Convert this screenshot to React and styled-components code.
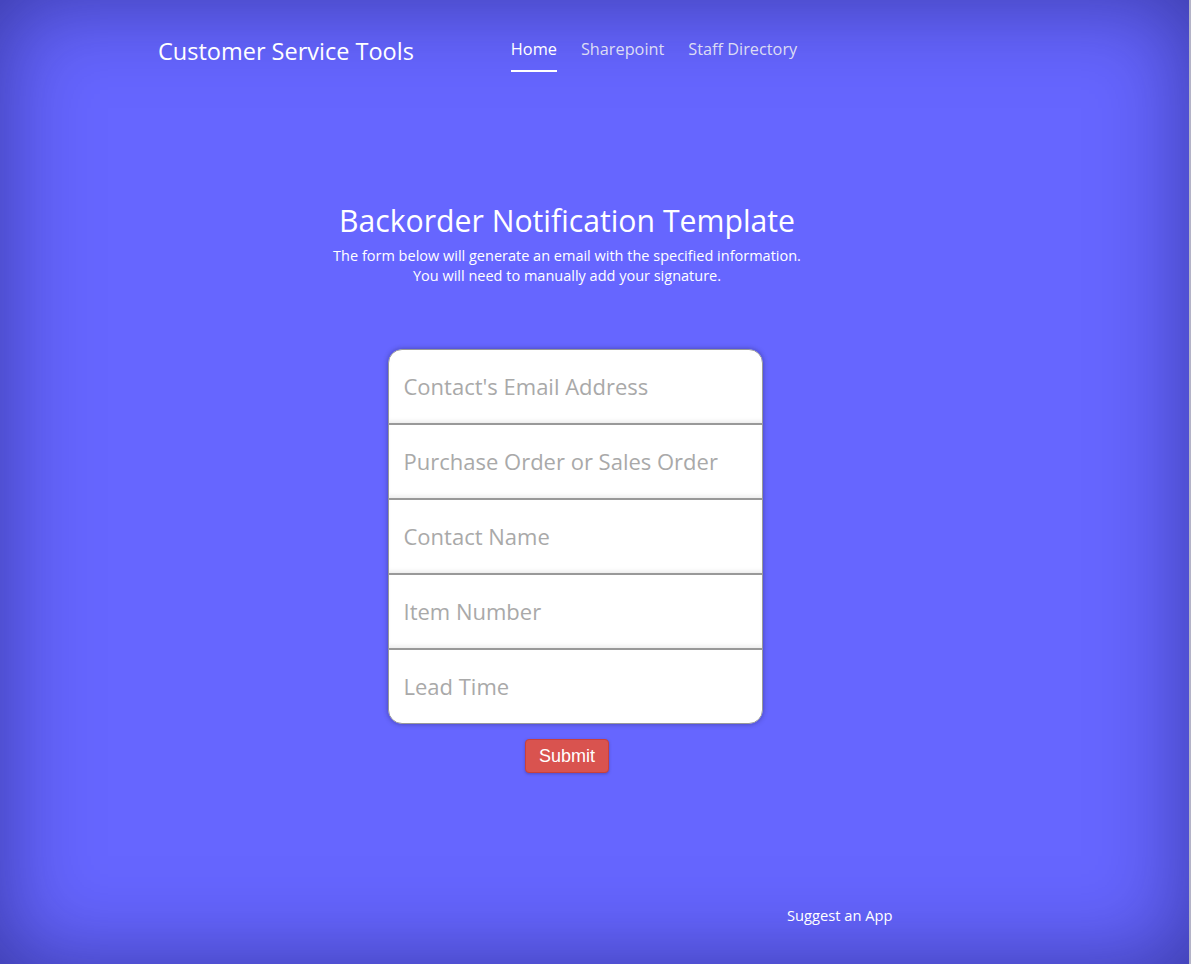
import styled, { createGlobalStyle } from "styled-components";

const GlobalStyle = createGlobalStyle`
  html, body {
    margin: 0;
    padding: 0;
  }
  body {
    font-family: "Open Sans", "Noto Sans", sans-serif;
    background: #6666ff;
  }
`;

const Page = styled.div`
  min-height: 964px;
  box-sizing: border-box;
  background: #6666ff;
  box-shadow: inset 0 0 90px rgba(20, 20, 90, 0.55);
  border-right: 2px solid #b4b4c8;
  display: flex;
  flex-direction: column;
  color: #fff;
`;

const Header = styled.header`
  display: flex;
  align-items: flex-start;
  padding: 36px 0 0 158px;
  height: 72px;
  box-sizing: border-box;
`;

const Brand = styled.div`
  font-size: 23.5px;
  line-height: 30px;
  color: #fff;
  margin-right: 97px;
`;

const Nav = styled.nav`
  display: flex;
  gap: 24px;
`;

const NavItem = styled.a`
  font-size: 16.3px;
  line-height: 26px;
  padding-bottom: 8px;
  color: ${(p) => (p.$active ? "#fff" : "#dcdcf4")};
  border-bottom: 2px solid ${(p) => (p.$active ? "#fff" : "transparent")};
  text-decoration: none;
`;

const Main = styled.main`
  width: 1134px;
  display: flex;
  flex-direction: column;
  align-items: center;
  padding-top: 129px;
`;

const Title = styled.h1`
  margin: 0;
  font-size: 30.2px;
  font-weight: 400;
  line-height: 40px;
`;

const Lead = styled.p`
  margin: 5px 0 0;
  font-size: 14.5px;
  line-height: 20px;
  text-align: center;
`;

const Form = styled.form`
  margin-top: 63px;
  display: flex;
  flex-direction: column;
  align-items: center;
`;

const Card = styled.div`
  width: 375px;
  border-radius: 14px;
  box-shadow: 0 0 5px rgba(30, 30, 80, 0.45);
  overflow: hidden;
  display: flex;
  flex-direction: column;
  transform: translateX(8px);
`;

const Field = styled.input`
  box-sizing: border-box;
  width: 100%;
  height: 75px;
  margin: 0;
  padding: 0 15px 2px;
  border: 1px solid #999;
  background: #fff;
  box-shadow: inset 0 -4px 4px -2px rgba(0, 0, 0, 0.08);
  font-family: "Open Sans", "Noto Sans", sans-serif;
  font-size: 22px;
  color: #555;
  outline: none;
  &::placeholder {
    color: #a9a9a9;
  }
  &:first-child {
    border-radius: 14px 14px 0 0;
  }
  &:last-child {
    border-radius: 0 0 14px 14px;
    box-shadow: none;
  }
`;

const Submit = styled.button`
  margin-top: 15px;
  width: 84px;
  height: 34px;
  background: #d9534f;
  border: 1px solid #c9403c;
  border-radius: 4px;
  box-shadow: 0 1px 3px rgba(40, 30, 80, 0.35);
  color: #fff;
  font-family: "Liberation Sans", Arial, sans-serif;
  font-size: 18px;
  cursor: pointer;
`;

const Footer = styled.footer`
  margin-top: auto;
  padding: 0 0 39px 787px;
  font-size: 14.7px;
  line-height: 20px;
`;

const fields = [
  "Contact's Email Address",
  "Purchase Order or Sales Order",
  "Contact Name",
  "Item Number",
  "Lead Time",
];

export default function App() {
  return (
    <>
      <GlobalStyle />
      <Page>
        <Header>
          <Brand>Customer Service Tools</Brand>
          <Nav>
            <NavItem $active>Home</NavItem>
            <NavItem>Sharepoint</NavItem>
            <NavItem>Staff Directory</NavItem>
          </Nav>
        </Header>
        <Main>
          <Title>Backorder Notification Template</Title>
          <Lead>
            The form below will generate an email with the specified information.
            <br />
            You will need to manually add your signature.
          </Lead>
          <Form onSubmit={(e) => e.preventDefault()}>
            <Card>
              {fields.map((f) => (
                <Field key={f} placeholder={f} />
              ))}
            </Card>
            <Submit type="submit">Submit</Submit>
          </Form>
        </Main>
        <Footer>Suggest an App</Footer>
      </Page>
    </>
  );
}
